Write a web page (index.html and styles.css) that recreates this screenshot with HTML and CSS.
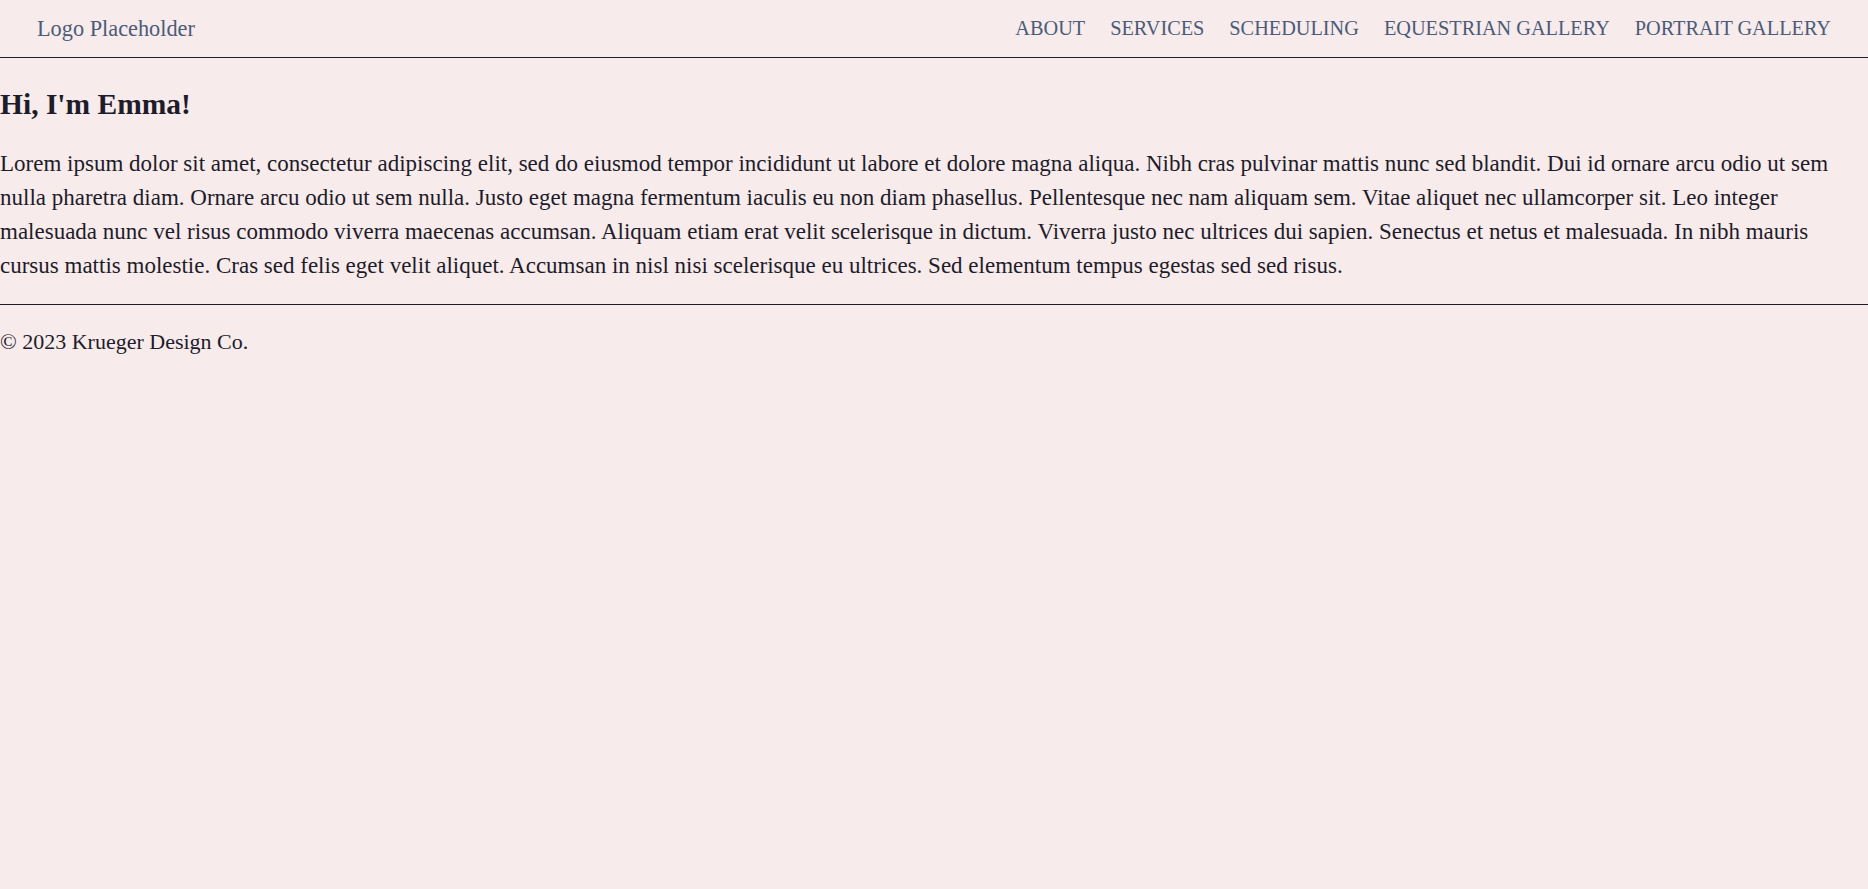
FILE: index.html
```html
<!DOCTYPE html>
<html lang="en">
<head>
<meta charset="utf-8">
<title>Emma</title>
<link rel="stylesheet" href="styles.css">
</head>
<body>
<header class="site-header">
  <a class="logo" href="#">Logo Placeholder</a>
  <nav class="nav">
    <a href="#">ABOUT</a>
    <a href="#">SERVICES</a>
    <a href="#">SCHEDULING</a>
    <a href="#">EQUESTRIAN GALLERY</a>
    <a href="#">PORTRAIT GALLERY</a>
  </nav>
</header>
<main class="content">
  <h1 class="title">Hi, I'm Emma!</h1>
  <p class="intro">Lorem ipsum dolor sit amet, consectetur adipiscing elit, sed do eiusmod tempor incididunt ut labore et dolore magna aliqua. Nibh cras pulvinar mattis nunc sed blandit. Dui id ornare arcu odio ut sem nulla pharetra diam. Ornare arcu odio ut sem nulla. Justo eget magna fermentum iaculis eu non diam phasellus. Pellentesque nec nam aliquam sem. Vitae aliquet nec ullamcorper sit. Leo integer malesuada nunc vel risus commodo viverra maecenas accumsan. Aliquam etiam erat velit scelerisque in dictum. Viverra justo nec ultrices dui sapien. Senectus et netus et malesuada. In nibh mauris cursus mattis molestie. Cras sed felis eget velit aliquet. Accumsan in nisl nisi scelerisque eu ultrices. Sed elementum tempus egestas sed sed risus.</p>
</main>
<footer class="site-footer">
  <p class="copy">© 2023 Krueger Design Co.</p>
</footer>
</body>
</html>
```
FILE: styles.css
```css
html, body {
  margin: 0;
  padding: 0;
  background: #f7ebeb;
  color: #1e1c2a;
  font-family: "Liberation Serif", serif;
}
a { text-decoration: none; }
.site-header {
  display: flex;
  justify-content: space-between;
  align-items: center;
  height: 57px;
  padding: 0 37px;
  border-bottom: 1px solid #1e1c2a;
}
.logo {
  color: #4b5b78;
  font-size: 22.3px;
}
.nav {
  display: flex;
  gap: 25px;
}
.nav a {
  color: #4b5b78;
  font-size: 20.3px;
}
.content {
  padding: 0;
}
.title {
  margin: 29px 0 25px;
  font-size: 29.5px;
  font-weight: 700;
  line-height: 1.2;
}
.intro {
  margin: 0 0 21px;
  font-size: 23px;
  line-height: 34px;
}
.site-footer {
  border-top: 1px solid #1e1c2a;
}
.copy {
  margin: 0;
  padding: 23px 0;
  font-size: 22px;
  line-height: 28px;
}
```
